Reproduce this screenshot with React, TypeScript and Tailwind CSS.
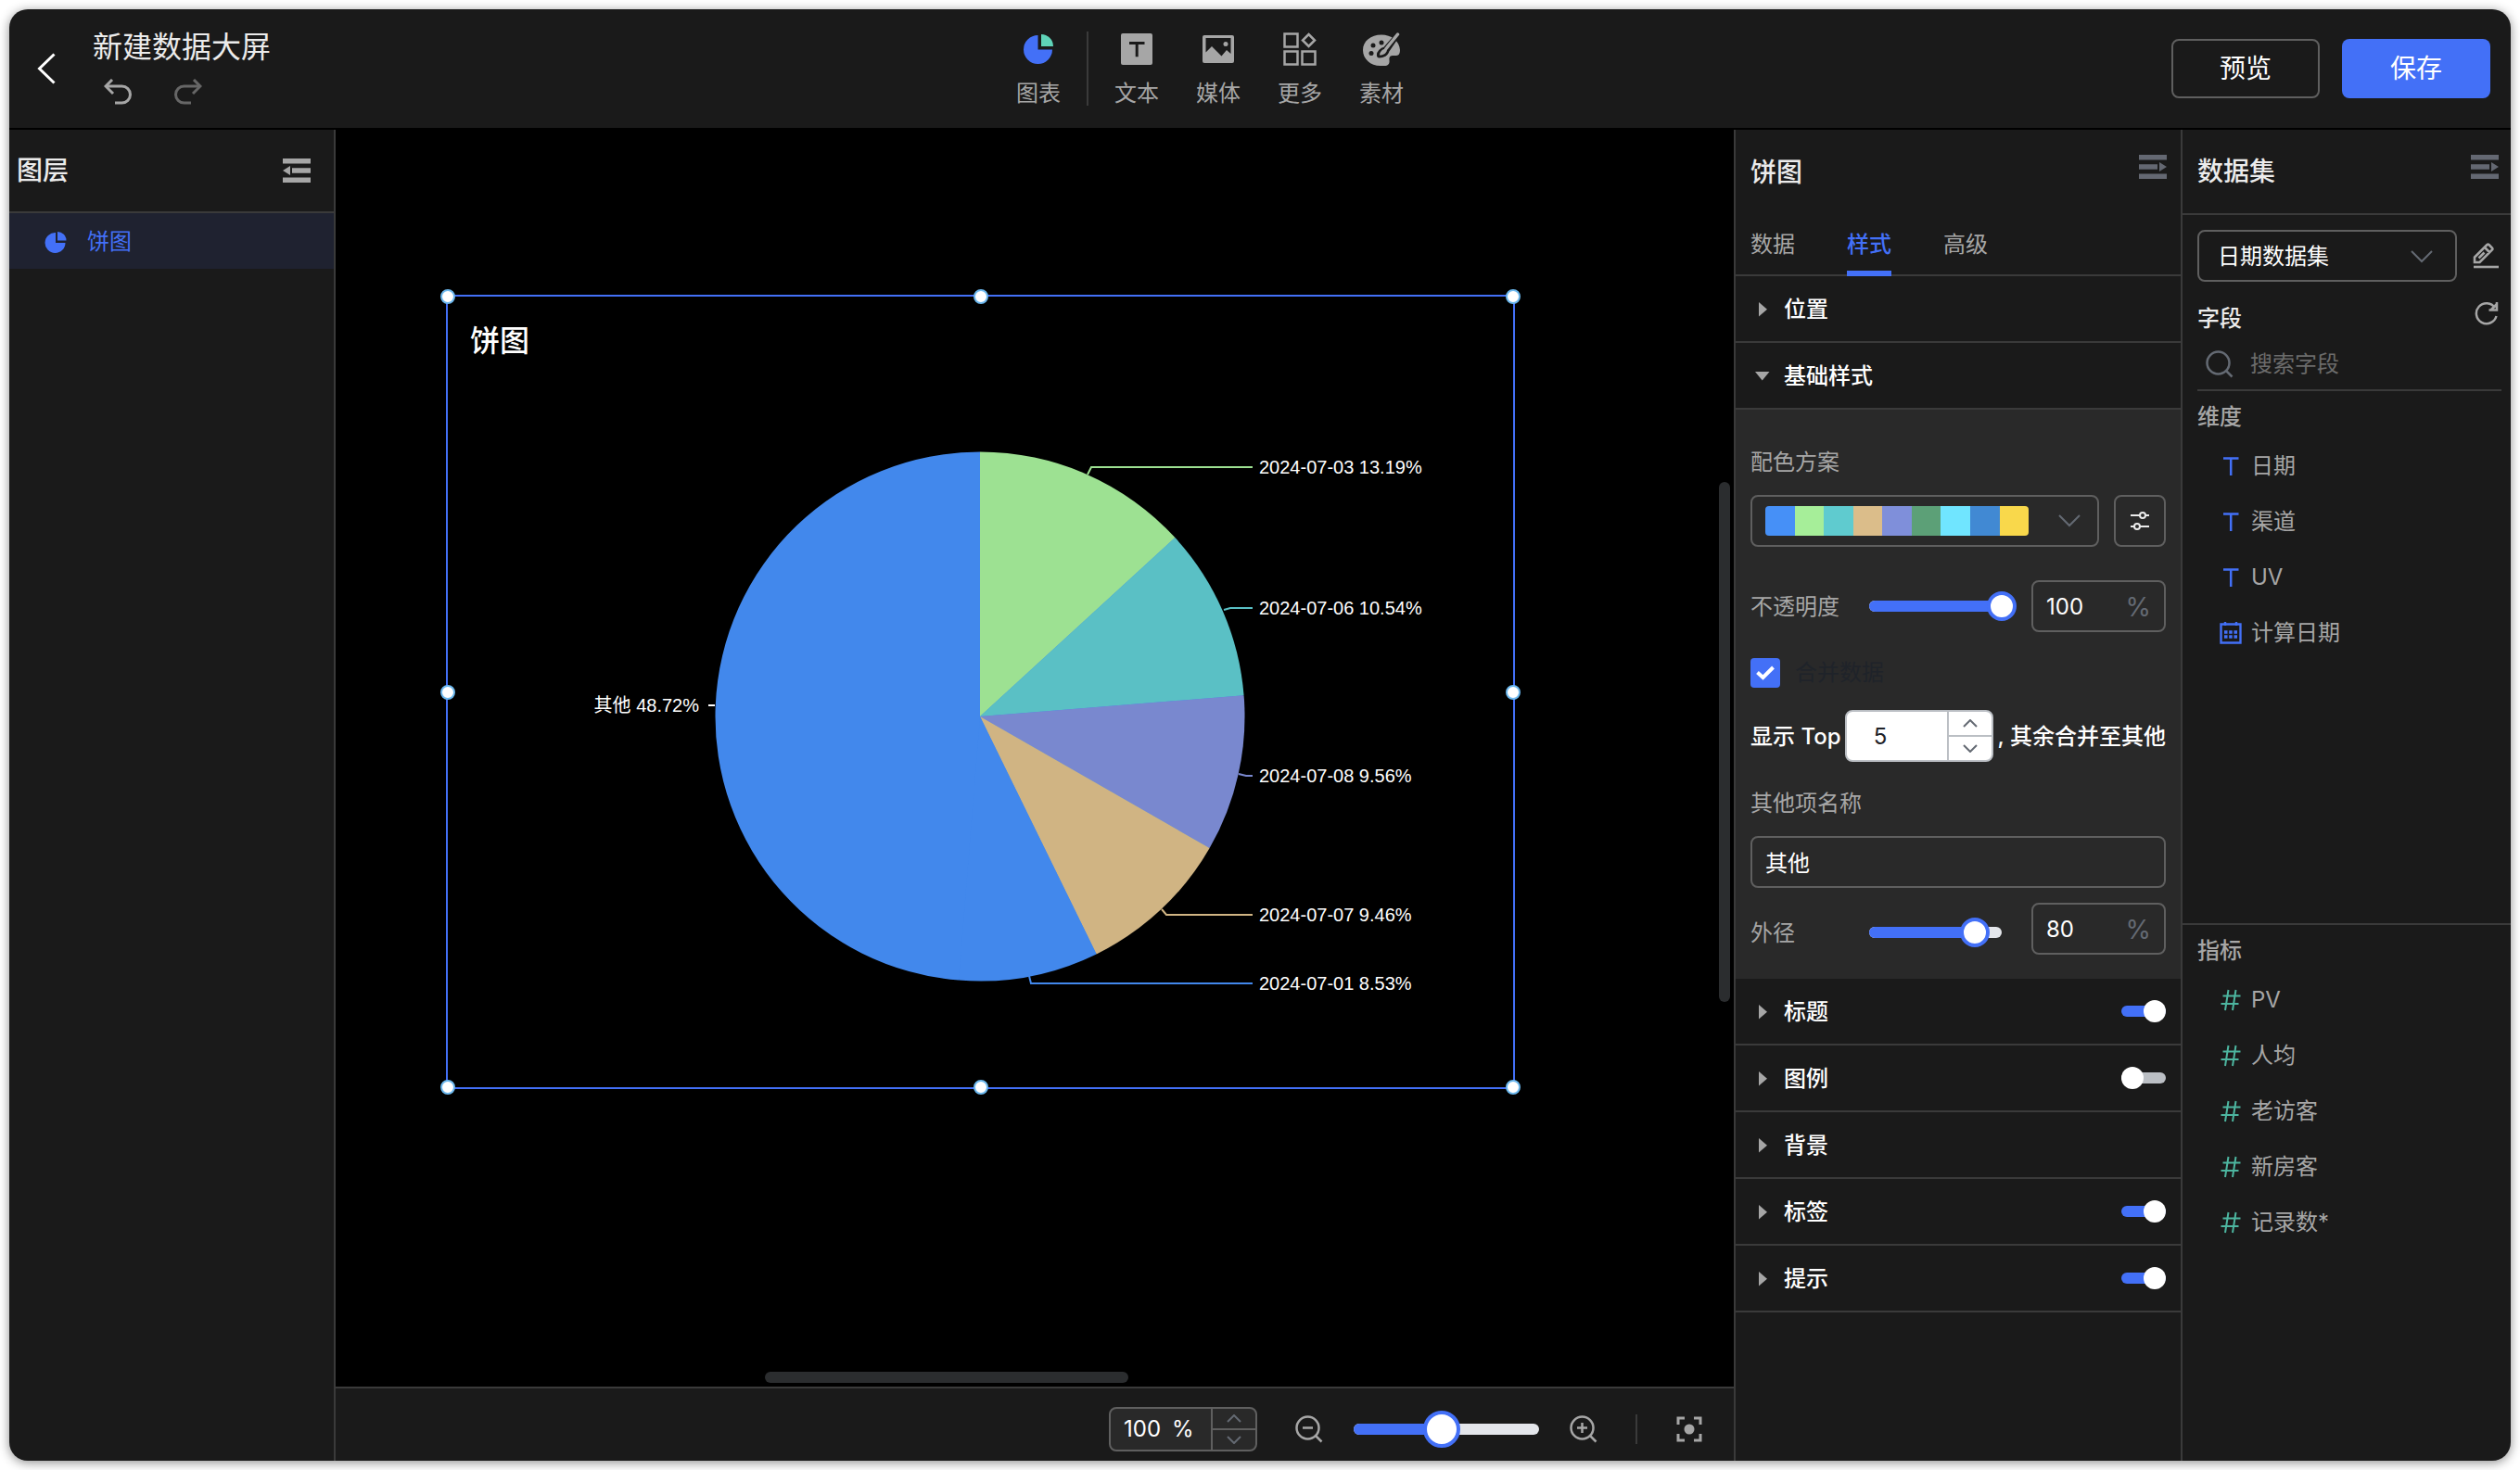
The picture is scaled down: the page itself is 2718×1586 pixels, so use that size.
import React, { useState } from "react";

type IconProps = { className?: string };

function BackIcon() {
  return (
    <svg width="20" height="34" viewBox="0 0 20 34" fill="none" stroke="#fff" strokeWidth="3">
      <path d="M18.500 1.500 2.500 17l16 15.500" />
    </svg>
  );
}

function UndoIcon({ className }: IconProps) {
  return (
    <svg className={className} width="30" height="28" viewBox="0 0 30 28" fill="none" stroke="currentColor" strokeWidth="3">
      <path d="M9 1 2 8l8 8" />
      <path d="M2 8h17.500a8.500 8.500 0 0 1 0 18H12" />
    </svg>
  );
}

function CollapseIcon({ className }: IconProps) {
  return (
    <svg className={className} width="30" height="26" viewBox="0 0 30 26" fill="currentColor">
      <path d="M0 0h30v5.500H0zM10 10.200h20v5.500H10zM0 20.500h30V26H0zM8 8v10L0 13z" />
    </svg>
  );
}

function PieIcon() {
  return (
    <svg width="24" height="24" viewBox="0 0 24 24" fill="currentColor">
      <path d="M12 2a11 11 0 1 0 10.500 11H12z" />
      <path d="M14 1a9.500 9.500 0 0 1 9.500 9.500H14z" />
    </svg>
  );
}

function ChartToolIcon() {
  return (
    <svg width="32" height="32" viewBox="0 0 32 32">
      <path d="M15.500 1A15.500 15.500 0 1 0 31 16.500H15.500z" fill="#4370f7" />
      <path d="M19 0a13 13 0 0 1 13 13H19z" fill="#5fd3b8" />
    </svg>
  );
}

function TextToolIcon() {
  return (
    <svg width="34" height="34" viewBox="0 0 34 34">
      <rect width="34" height="34" rx="2" fill="#a6a6a6" />
      <path d="M9 9h16.500v3H18.700v13.300h-3V12H9z" fill="#1a1a1a" />
    </svg>
  );
}

function MediaToolIcon() {
  return (
    <svg width="34" height="30" viewBox="0 0 34 30">
      <rect width="34" height="30" rx="2" fill="#a6a6a6" />
      <path d="M3.500 3h27v17L26 16l-5.500 6.500L10 12l-6.500 6.500z" fill="#1a1a1a" />
      <circle cx="25" cy="9.500" r="2.500" fill="#a6a6a6" />
    </svg>
  );
}

function MoreToolIcon() {
  return (
    <svg width="36" height="36" viewBox="0 0 36 36" fill="none" stroke="#a6a6a6" strokeWidth="2.500">
      <path d="M1.500 1.500h14v14h-14zM1.500 20.500h14v14h-14zM20.500 20.500h14v14h-14zM27.500 2 34 8.500 27.500 15 21 8.500z" />
    </svg>
  );
}

function PaletteToolIcon() {
  return (
    <svg width="40" height="36" viewBox="0 0 40 36">
      <path d="M20 2.500C8.500 2.500 0 9.500 0 19c0 9.500 8 17 19 17h4c4 0 6-2 5.500-6s1-5 4.500-5h3c3 0 4-3 4-6C39.500 9 30.500 2.500 20 2.500z" fill="#a6a6a6" />
      <g fill="#1a1a1a">
        <circle cx="11" cy="14" r="2.500" />
        <circle cx="20" cy="11" r="2.500" />
        <circle cx="9" cy="22.500" r="2.500" />
      </g>
      <path d="M38 2 24 18c-4 1-7 4-6.500 7 4 0 8-2 8.500-5.500z" fill="#a6a6a6" stroke="#1a1a1a" strokeWidth="5" strokeLinejoin="round" />
      <path d="M37.500 2 25 17.500" stroke="#a6a6a6" strokeWidth="3.500" strokeLinecap="round" />
      <path d="M24 17.500c-3.500 1-6 4-6 7 4 0 7-2 8-5z" fill="#a6a6a6" />
    </svg>
  );
}

function ChevronDown({ className }: IconProps) {
  return (
    <svg className={className} width="24" height="14" viewBox="0 0 24 14" fill="none" stroke="currentColor" strokeWidth="2">
      <path d="m1 1 11 11L23 1" />
    </svg>
  );
}

function SmallChevron({ up = false }: { up?: boolean }) {
  return (
    <svg width="16" height="9" viewBox="0 0 16 9" fill="none" stroke="currentColor" strokeWidth="2">
      <path d={up ? "M1 8l7-7 7 7" : "M1 1l7 7 7-7"} />
    </svg>
  );
}

function TuneIcon() {
  return (
    <svg width="20" height="20" viewBox="0 0 20 20" fill="none" stroke="#ebebeb" strokeWidth="2">
      <path d="M0 4h10M16 4h4M0 16h4M10 16h10" />
      <circle cx="13" cy="4" r="3" />
      <circle cx="7" cy="16" r="3" />
    </svg>
  );
}

function PencilIcon() {
  return (
    <svg width="28" height="28" viewBox="0 0 28 28" fill="none" stroke="#a6a6a6" strokeWidth="2.600">
      <path d="M2 21V15.500L15.500 2q1-.8 2 0l3.500 3.500q.8 1 0 2L7.500 21zM13 5l5.500 5.500M6.500 16.500l6-6" />
      <path d="M1 26h27" />
    </svg>
  );
}

function RefreshIcon() {
  return (
    <svg width="26" height="26" viewBox="0 0 26 26" fill="none" stroke="#a6a6a6" strokeWidth="2.500">
      <path d="M23.500 16A11 11 0 1 1 22 7" />
      <path d="M24 1v8.500h-8.500M24 3l-6 6" />
    </svg>
  );
}

function SearchIcon() {
  return (
    <svg width="30" height="30" viewBox="0 0 30 30" fill="none" stroke="#646a73" strokeWidth="2.500">
      <circle cx="13.500" cy="13.500" r="12" />
      <path d="m22 22 6.500 6.500" />
    </svg>
  );
}

function TypeIcon() {
  return (
    <svg width="24" height="24" viewBox="0 0 24 24" fill="none" stroke="#4370f7" strokeWidth="2.500">
      <path d="M4 3.500h16.500M12.200 3.500V22" />
    </svg>
  );
}

function CalendarIcon() {
  return (
    <svg width="24" height="24" viewBox="0 0 24 24" fill="none" stroke="#4370f7" strokeWidth="2.400">
      <path d="M1.500 2.500h21v20h-21zM6 0v4M18 0v4" />
      <path d="M5 11h3.500M10.200 11h3.500M15.500 11H19M5 16h3.500M10.200 16h3.500M15.500 16H19" strokeWidth="3.500" />
    </svg>
  );
}

function HashIcon() {
  return (
    <svg width="24" height="24" viewBox="0 0 24 24" fill="none" stroke="#4db6a0" strokeWidth="2">
      <path d="M9.500 1 6 23M17.500 1 14 23M3.500 7.500h19M1.500 16h19" />
    </svg>
  );
}

function ZoomIcon({ plus = false }: { plus?: boolean }) {
  return (
    <svg width="30" height="30" viewBox="0 0 30 30" fill="none" stroke="#a6a6a6" strokeWidth="2.500">
      <circle cx="13.500" cy="13.500" r="12" />
      <path d="m22 22 6.500 6.500M8 13.500h11" />
      {plus && <path d="M13.500 8v11" />}
    </svg>
  );
}

function FocusIcon() {
  return (
    <svg width="28" height="28" viewBox="0 0 28 28" fill="none" stroke="#a6a6a6" strokeWidth="3">
      <path d="M9 2H2v7M19 2h7v7M9 26H2v-7M19 26h7v-7" />
      <circle cx="14" cy="14" r="5.500" fill="#a6a6a6" stroke="none" />
    </svg>
  );
}

function Slider({
  label,
  value,
  min = 0,
  max = 100,
  large = false,
}: {
  label: string;
  value: number;
  min?: number;
  max?: number;
  large?: boolean;
}) {
  const [current, setCurrent] = useState(value);
  const percent = ((current - min) / (max - min)) * 100;
  return (
    <div className={large ? "relative h-3 w-[200px] rounded-full bg-[#e4e6eb]" : "relative h-3 w-[143px] rounded-full bg-[#e4e6eb]"}>
      <div className="h-3 rounded-full bg-[#4370f7]" style={{ width: `${percent}%` }} />
      <input
        type="range"
        aria-label={label}
        min={min}
        max={max}
        value={current}
        onChange={(e) => setCurrent(Number(e.target.value))}
        className={
          large
            ? "absolute -left-5 -top-3.5 h-10 w-60 appearance-none bg-transparent [&::-webkit-slider-thumb]:size-10 [&::-webkit-slider-thumb]:appearance-none [&::-webkit-slider-thumb]:rounded-full [&::-webkit-slider-thumb]:border-4 [&::-webkit-slider-thumb]:border-[#4370f7] [&::-webkit-slider-thumb]:bg-white"
            : "absolute -left-4 -top-2.5 h-8 w-[175px] appearance-none bg-transparent [&::-webkit-slider-thumb]:size-8 [&::-webkit-slider-thumb]:appearance-none [&::-webkit-slider-thumb]:rounded-full [&::-webkit-slider-thumb]:border-4 [&::-webkit-slider-thumb]:border-[#4370f7] [&::-webkit-slider-thumb]:bg-white"
        }
      />
    </div>
  );
}

function PercentBox({ id, value }: { id: string; value: string }) {
  return (
    <div className="flex h-14 w-[145px] items-center justify-between rounded-lg border-2 border-[#5f5f5f] px-3.5 pt-0.5">
      <input id={id} defaultValue={value} className="w-16 bg-transparent text-2xl text-white outline-none" />
      <span className="text-[28px] text-[#646a73]">%</span>
    </div>
  );
}

function Section({ title, open = false, toggle }: { title: string; open?: boolean; toggle?: boolean }) {
  return (
    <div className="flex h-[72px] items-center border-b-2 border-[#3a3a3a] pr-4">
      <button type="button" aria-expanded={open} className="flex h-full flex-1 items-center pt-0.5 text-left">
        <span className="flex w-[52px] justify-center pl-1.5">
          {open ? (
            <svg width="16" height="10" viewBox="0 0 16 10" fill="#a6a6a6">
              <path d="M0 0h15.500L7.700 9.500z" />
            </svg>
          ) : (
            <svg width="10" height="16" viewBox="0 0 10 16" fill="#a6a6a6">
              <path d="M1 0v15.500l9-7.700z" />
            </svg>
          )}
        </span>
        <span className="text-2xl font-medium text-white">{title}</span>
      </button>
      {toggle !== undefined && (
        <input
          type="checkbox"
          role="switch"
          aria-label={title}
          defaultChecked={toggle}
          className="relative h-3 w-12 appearance-none rounded-full bg-[#bbbfc4] before:absolute before:-top-1.5 before:left-0 before:size-6 before:rounded-full before:bg-white checked:bg-[#4370f7] checked:before:left-6"
        />
      )}
    </div>
  );
}

function Tool({ label, children }: { label: string; children: React.ReactNode }) {
  return (
    <button type="button" className="flex w-[88px] flex-col items-center gap-3 pt-1.5 text-2xl/9 text-[#a6a6a6]">
      <span className="flex h-9 items-center">{children}</span>
      {label}
    </button>
  );
}

const slices = [
  { label: "2024-07-03 13.19%", value: 13.19, color: "#9de192", line: "M692 194l4-8H870", y: 186 },
  { label: "2024-07-06 10.54%", value: 10.54, color: "#5ac0c5", line: "M839 340l7-2H870", y: 338 },
  { label: "2024-07-08 9.56%", value: 9.56, color: "#7988cf", line: "M855 517l8 2H870", y: 519 },
  { label: "2024-07-07 9.46%", value: 9.46, color: "#d0b483", line: "M772 663l5 6H870", y: 669 },
  { label: "2024-07-01 8.53%", value: 8.53, color: "#4288ec", line: "M629 735l2 8H870", y: 743 },
  { label: "其他 48.72%", value: 48.72, color: "#4288ec", line: "", y: 443 },
];

const CX = 576;
const CY = 455;
const R = 285.5;

function PieChart() {
  let total = 0;
  const point = (v: number) => {
    const a = (v / 100) * Math.PI * 2;
    return `${CX + R * Math.sin(a)} ${CY - R * Math.cos(a)}`;
  };
  return (
    <svg viewBox="0 0 1153 857" className="absolute -inset-0.5 h-[857px] w-[1153px] font-['Liberation_Sans','Noto_Sans_CJK_SC',sans-serif]">
      <circle cx={CX} cy={CY} r={R - 1} fill="#4288ec" />
      {slices.map((s) => {
        const from = total;
        total += s.value;
        return <path key={s.label} d={`M${CX} ${CY}L${point(from)}A${R} ${R} 0 0 1 ${point(total)}Z`} fill={s.color} />;
      })}
      {slices.map((s) =>
        s.line ? (
          <g key={s.label}>
            <path d={s.line} fill="none" stroke={s.color} strokeWidth="2" />
            <text x="877" y={s.y + 7} fontSize="20" fill="#fff">
              {s.label}
            </text>
          </g>
        ) : (
          <g key={s.label}>
            <path d="M283 443h7" stroke="#fff" strokeWidth="2" />
            <text x="273" y={s.y + 7} fontSize="20" fill="#fff" textAnchor="end">
              {s.label}
            </text>
          </g>
        ),
      )}
    </svg>
  );
}

const handles = [
  "left-0 top-0",
  "left-1/2 top-0",
  "left-full top-0",
  "left-0 top-1/2",
  "left-full top-1/2",
  "left-0 top-full",
  "left-1/2 top-full",
  "left-full top-full",
];

const palette = [
  "bg-[#4690f7]",
  "bg-[#a6ee99]",
  "bg-[#5fcbcf]",
  "bg-[#dbbd8a]",
  "bg-[#7f8fda]",
  "bg-[#5ca077]",
  "bg-[#70e5ff]",
  "bg-[#4189d3]",
  "bg-[#f9d84b]",
];

const dimensions = [
  { name: "日期", date: false },
  { name: "渠道", date: false },
  { name: "UV", date: false },
  { name: "计算日期", date: true },
];

const measures = ["PV", "人均", "老访客", "新房客", "记录数*"];

function Field({ icon, name }: { icon: React.ReactNode; name: string }) {
  return (
    <li className="flex h-[60px] items-center gap-2.5 pl-10 pt-0.5 text-2xl text-[#a6a6a6]">
      {icon}
      {name}
    </li>
  );
}

export default function App() {
  return (
    <div className="h-screen bg-white p-2.5 font-['Inter','Noto_Sans_CJK_SC',sans-serif]">
      <div className="flex h-full flex-col overflow-hidden rounded-[20px] bg-[#1a1a1a] shadow-[0_2px_12px_rgba(0,0,0,0.45)]">
        <header className="flex h-[130px] shrink-0 items-center justify-between border-b-2 border-black pl-[30px] pr-[22px]">
          <div className="flex items-center">
            <button type="button" aria-label="返回" className="w-[60px]">
              <BackIcon />
            </button>
            <div className="pb-1.5">
              <h1 className="text-[32px]/[44px] text-[#ebebeb]">新建数据大屏</h1>
              <div className="mt-3 flex gap-[46px] pl-3">
                <button type="button" aria-label="撤销">
                  <UndoIcon className="text-[#a6a6a6]" />
                </button>
                <button type="button" aria-label="重做">
                  <UndoIcon className="-scale-x-100 text-[#666666]" />
                </button>
              </div>
            </div>
          </div>
          <nav className="flex items-center pr-2">
            <button type="button" className="flex w-14 flex-col items-center gap-3 pt-1.5 text-2xl/9 text-[#a6a6a6]">
              <span className="flex h-9 items-center">
                <ChartToolIcon />
              </span>
              图表
            </button>
            <span className="ml-6 mr-2 h-20 w-0.5 bg-[#3a3a3a]" />
            <Tool label="文本">
              <TextToolIcon />
            </Tool>
            <Tool label="媒体">
              <MediaToolIcon />
            </Tool>
            <Tool label="更多">
              <MoreToolIcon />
            </Tool>
            <Tool label="素材">
              <PaletteToolIcon />
            </Tool>
          </nav>
          <div className="flex gap-6">
            <button type="button" className="h-16 w-40 rounded-lg border-2 border-[#5f5f5f] text-[28px] text-white">
              预览
            </button>
            <button type="button" className="h-16 w-40 rounded-lg bg-[#4370f7] text-[28px] text-white">
              保存
            </button>
          </div>
        </header>

        <div className="flex min-h-0 flex-1">
          <aside className="w-[352px] shrink-0 border-r-2 border-[#3a3a3a]">
            <div className="flex h-[90px] items-center justify-between border-b-2 border-[#3a3a3a] pl-2 pr-[25px]">
              <h2 className="text-[28px] font-medium text-[#ebebeb]">图层</h2>
              <button type="button" aria-label="收起图层">
                <CollapseIcon className="text-[#a6a6a6]" />
              </button>
            </div>
            <button type="button" className="flex h-[60px] w-full items-center gap-[22px] bg-[#1f2230] pl-[38px] pt-0.5 text-2xl text-[#4370f7]">
              <PieIcon />
              饼图
            </button>
          </aside>

          <main className="flex min-w-0 flex-1 flex-col">
            <div className="relative flex-1 overflow-hidden bg-black">
              <div className="absolute left-[119px] top-[178px] h-[857px] w-[1153px] border-2 border-[#4370f7]">
                <PieChart />
                {handles.map((h) => (
                  <span key={h} className={`${h} absolute size-4 -translate-x-1/2 -translate-y-1/2 rounded-full border-2 border-[#6cb8ee] bg-white`} />
                ))}
                <h3 className="px-6 py-6 text-[32px]/[48px] font-medium text-white">饼图</h3>
              </div>
              <div className="absolute bottom-1 left-[463px] h-3 w-[392px] rounded-md bg-[#2b2d2f]" />
              <div className="absolute right-1 top-[380px] h-[561px] w-3 rounded-md bg-[#2b2d2f]" />
            </div>
            <footer className="flex h-20 shrink-0 items-center justify-end border-t-2 border-[#3a3a3a] pr-[34px] pt-2.5">
              <div className="flex h-12 w-40 overflow-hidden rounded-lg border-2 border-[#5f5f5f] bg-[#292929] text-2xl text-white">
                <label className="flex flex-1 items-center pl-3.5">
                  <input aria-label="缩放比例" defaultValue="100" className="w-[52px] bg-transparent outline-none" />%
                </label>
                <div className="flex w-12 flex-col border-l-2 border-[#5f5f5f] text-[#646a73]">
                  <button type="button" aria-label="增大" className="flex flex-1 items-center justify-center border-b-2 border-[#5f5f5f]">
                    <SmallChevron up />
                  </button>
                  <button type="button" aria-label="减小" className="flex flex-1 items-center justify-center">
                    <SmallChevron />
                  </button>
                </div>
              </div>
              <button type="button" aria-label="缩小" className="ml-[41px] mr-[33px]">
                <ZoomIcon />
              </button>
              <Slider label="画布缩放" value={100} min={10} max={200} large />
              <button type="button" aria-label="放大" className="ml-[33px] mr-[41px]">
                <ZoomIcon plus />
              </button>
              <span className="h-8 w-0.5 bg-[#3a3a3a]" />
              <button type="button" aria-label="居中" className="ml-[42px]">
                <FocusIcon />
              </button>
            </footer>
          </main>

          <aside className="w-[484px] shrink-0 border-x-2 border-[#3a3a3a]">
            <div className="flex h-[90px] items-center justify-between pl-4 pr-[15px] pt-0.5">
              <h2 className="text-[28px] font-medium text-[#ebebeb]">饼图</h2>
              <button type="button" aria-label="收起样式" className="pb-3">
                <CollapseIcon className="-scale-x-100 text-[#646872]" />
              </button>
            </div>
            <div role="tablist" className="flex h-[68px] items-stretch gap-14 border-b-2 border-[#3a3a3a] px-4 text-2xl text-[#a6a6a6]">
              <button type="button" role="tab" className="pt-0.5">
                数据
              </button>
              <button type="button" role="tab" aria-selected="true" className="-mb-0.5 border-b-6 border-[#4370f7] pt-1.5 font-medium text-[#4370f7]">
                样式
              </button>
              <button type="button" role="tab" className="pt-0.5">
                高级
              </button>
            </div>
            <Section title="位置" />
            <Section title="基础样式" open />
            <div className="bg-[#292929] px-4 pb-[18px] pt-[39px] text-2xl/9 text-[#a6a6a6]">
              <div>配色方案</div>
              <div className="mt-[17px] flex justify-between">
                <button type="button" aria-label="配色方案" className="flex h-14 w-[376px] items-center justify-between rounded-lg border-2 border-[#5f5f5f] pl-3.5 pr-[18px] text-[#646a73]">
                  <span className="flex h-8 w-[284px] overflow-hidden rounded">
                    {palette.map((c) => (
                      <span key={c} className={`${c} flex-1`} />
                    ))}
                  </span>
                  <ChevronDown />
                </button>
                <button type="button" aria-label="自定义配色" className="flex size-14 items-center justify-center rounded-lg border-2 border-[#5f5f5f]">
                  <TuneIcon />
                </button>
              </div>
              <div className="mt-9 flex items-center">
                <label htmlFor="opacity" className="w-32 pt-0.5">
                  不透明度
                </label>
                <Slider label="不透明度" value={100} />
                <div className="ml-auto">
                  <PercentBox id="opacity" value="100" />
                </div>
              </div>
              <label className="mt-7 flex h-8 items-center gap-4 text-[#1f2329]">
                <span className="grid size-8 place-items-center rounded bg-[#4370f7]">
                  <input type="checkbox" defaultChecked className="col-start-1 row-start-1 size-8 appearance-none" />
                  <svg width="20" height="16" viewBox="0 0 20 16" fill="none" stroke="#fff" strokeWidth="4" className="col-start-1 row-start-1">
                    <path d="m1.500 7.500 6 5.500L18.500 2" />
                  </svg>
                </span>
                合并数据
              </label>
              <div className="mt-6 flex items-center justify-between whitespace-nowrap font-medium text-white">
                <label htmlFor="top-count" className="pt-0.5">
                  显示 Top
                </label>
                <div className="flex h-14 w-40 shrink-0 overflow-hidden rounded-lg border-2 border-[#bbbfc4] bg-white font-normal text-[#1f2329]">
                  <input id="top-count" defaultValue="5" className="w-[108px] pr-9 pt-0.5 text-center outline-none" />
                  <div className="flex flex-1 flex-col border-l-2 border-[#bbbfc4] text-[#646a73]">
                    <button type="button" aria-label="增加" className="flex flex-1 items-center justify-center border-b-2 border-[#bbbfc4]">
                      <SmallChevron up />
                    </button>
                    <button type="button" aria-label="减少" className="flex flex-1 items-center justify-center">
                      <SmallChevron />
                    </button>
                  </div>
                </div>
                <span className="pt-0.5">, 其余合并至其他</span>
              </div>
              <label htmlFor="other-name" className="mt-[27px] block">
                其他项名称
              </label>
              <input id="other-name" defaultValue="其他" className="mt-[17px] block h-14 w-full rounded-lg border-2 border-[#5f5f5f] bg-transparent px-3.5 pb-0.5 text-white outline-none" />
              <div className="mt-4 flex">
                <label htmlFor="radius" className="flex h-16 w-32 items-center pt-0.5">
                  外径
                </label>
                <div className="flex h-16 items-center">
                  <Slider label="外径" value={80} />
                </div>
                <div className="ml-auto">
                  <PercentBox id="radius" value="80" />
                </div>
              </div>
            </div>
            <Section title="标题" toggle={true} />
            <Section title="图例" toggle={false} />
            <Section title="背景" />
            <Section title="标签" toggle={true} />
            <Section title="提示" toggle={true} />
          </aside>

          <aside className="w-[354px] shrink-0">
            <div className="flex h-[92px] items-center justify-between border-b-2 border-[#3a3a3a] pl-4 pr-[13px]">
              <h2 className="text-[28px] font-medium text-[#ebebeb]">数据集</h2>
              <button type="button" aria-label="收起数据集" className="pb-2.5">
                <CollapseIcon className="-scale-x-100 text-[#646872]" />
              </button>
            </div>
            <div className="h-[766px] border-b-2 border-[#3a3a3a] pt-4">
              <div className="flex items-center justify-between pl-4 pr-[13px]">
                <div className="relative">
                  <select aria-label="数据集" className="h-14 w-[280px] appearance-none rounded-lg border-2 border-[#5f5f5f] bg-transparent pl-5 pt-0.5 text-2xl text-white outline-none">
                    <option>日期数据集</option>
                  </select>
                  <ChevronDown className="pointer-events-none absolute right-[26px] top-[22px] text-[#646a73]" />
                </div>
                <button type="button" aria-label="编辑数据集">
                  <PencilIcon />
                </button>
              </div>
              <div className="mt-4 flex h-12 items-center justify-between pl-4 pr-[13px]">
                <h3 className="text-2xl font-medium text-[#ebebeb]">字段</h3>
                <button type="button" aria-label="刷新字段" className="pb-3">
                  <RefreshIcon />
                </button>
              </div>
              <label className="ml-4 mr-2.5 flex h-[54px] items-center gap-[18px] border-b-2 border-[#3a3a3a] pb-0.5 pl-[9px]">
                <SearchIcon />
                <input aria-label="搜索字段" placeholder="搜索字段" className="w-56 bg-transparent text-2xl text-white outline-none placeholder:text-[#6b6b6b]" />
              </label>
              <h4 className="mt-2.5 pl-4 text-2xl/9 font-medium text-[#a6a6a6]">维度</h4>
              <ul className="mt-1">
                {dimensions.map((d) => (
                  <Field key={d.name} icon={d.date ? <CalendarIcon /> : <TypeIcon />} name={d.name} />
                ))}
              </ul>
            </div>
            <h4 className="mt-2.5 pl-4 text-2xl/9 font-medium text-[#a6a6a6]">指标</h4>
            <ul className="mt-1">
              {measures.map((m) => (
                <Field key={m} icon={<HashIcon />} name={m} />
              ))}
            </ul>
          </aside>
        </div>
      </div>
    </div>
  );
}
